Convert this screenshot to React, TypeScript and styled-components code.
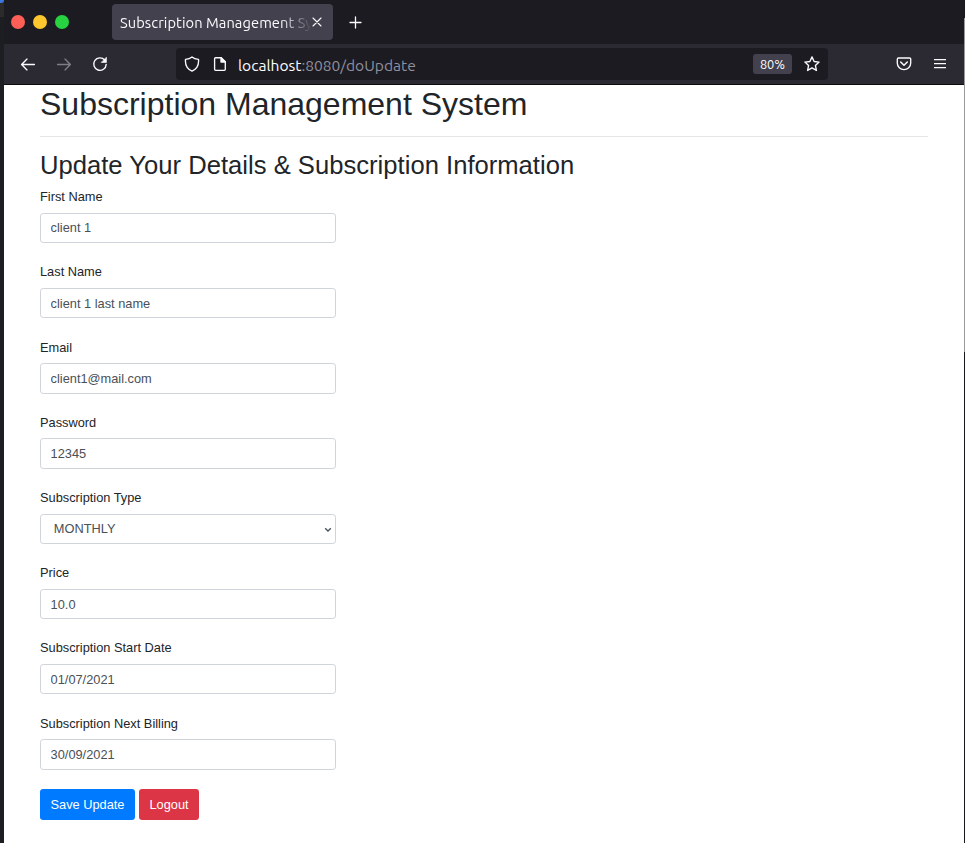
import React from "react";
import styled, { createGlobalStyle } from "styled-components";

const GlobalStyle = createGlobalStyle`
  * { box-sizing: border-box; }
  body { margin: 0; background: #fff; overflow: hidden; }
`;

const uiFont = `"Ubuntu", "Noto Sans", sans-serif`;
const pageFont = `"Liberation Sans", Arial, sans-serif`;

const Desktop = styled.div`
  display: grid;
  grid-template-columns: 4px 960px 1px;
  width: 965px;
  height: 843px;
`;

const LeftEdge = styled.div`
  background: linear-gradient(#2b2b2b 0 17px, #1c1e22 17px);
  &::before {
    content: "";
    display: block;
    width: 4px;
    height: 3px;
    background: #3b78e0;
    border-bottom-right-radius: 3px;
  }
`;

const RightEdge = styled.div`
  background: linear-gradient(#1a1a1e 0 18px, #999 18px 352px, #17171b 352px);
`;

const Window = styled.div`
  display: flex;
  flex-direction: column;
  background: #fff;
  overflow: hidden;
`;

const TabBar = styled.div`
  display: flex;
  align-items: center;
  height: 44px;
  background: #1c1b22;
  color: #fbfbfe;
`;

const Lights = styled.div`
  display: flex;
  gap: 8px;
  width: 108px;
  padding-left: 7px;
`;

const Light = styled.span<{ $color: string }>`
  width: 14px;
  height: 14px;
  border-radius: 50%;
  background: ${(p) => p.$color};
`;

const Tab = styled.div`
  display: flex;
  align-items: center;
  width: 221px;
  height: 36px;
  padding: 0 9px 0 8px;
  border-radius: 4px;
  background: #42414d;
`;

const TabTitle = styled.span`
  width: 190px;
  padding-top: 2px;
  overflow: hidden;
  white-space: nowrap;
  font: 14.67px/22px ${uiFont};
  font-weight: 430;
  letter-spacing: 0.07px;
  mask-image: linear-gradient(to right, #000 160px, transparent 192px);
`;

const NewTab = styled.div`
  display: flex;
  margin-left: 14px;
`;

const Toolbar = styled.div`
  display: flex;
  align-items: center;
  height: 41px;
  padding: 0 16px;
  background: #2b2a33;
  border-bottom: 1px solid #0c0c0d;
  color: #fbfbfe;
  svg { display: block; flex: none; }
`;

const NavButtons = styled.div`
  display: flex;
  gap: 20px;
  width: 156px;
`;

const Dimmed = styled.span`
  opacity: 0.4;
`;

const AddressBar = styled.div`
  display: flex;
  align-items: center;
  width: 652px;
  height: 32px;
  padding: 0 8px;
  border-radius: 4px;
  background: #1c1b22;
`;

const SiteIcons = styled.div`
  display: flex;
  gap: 12px;
  width: 54px;
`;

const Address = styled.span`
  flex: 1;
  padding-top: 2px;
  font: 15.58px/22px ${uiFont};
  font-weight: 430;
  color: #8f8f9d;
`;

const Host = styled.span`
  color: #fbfbfe;
`;

const ZoomBadge = styled.span`
  width: 39px;
  height: 20px;
  margin-right: 12px;
  border-radius: 3px;
  background: #42414d;
  font: 12.8px/21px ${uiFont};
  font-weight: 430;
  text-align: center;
`;

const ToolbarEnd = styled.div`
  display: flex;
  gap: 20px;
  margin-left: auto;
`;

const Page = styled.main`
  flex: 1;
  padding: 0 36px;
  font: 12.8px/19.2px ${pageFont};
  color: #212529;
`;

const Title = styled.h1`
  margin: 0;
  font-size: 32px;
  font-weight: 400;
  line-height: 38.4px;
`;

const Rule = styled.hr`
  margin: 12.6px 0 13.08px;
  border: 0;
  border-top: 1px solid #e5e5e5;
`;

const Subtitle = styled.h2`
  margin: 0 0 6.4px;
  font-size: 25.6px;
  font-weight: 400;
  line-height: 30.7px;
  letter-spacing: 0.015px;
`;

const Form = styled.form`
  display: flex;
  flex-direction: column;
  gap: 19.25px;
  width: 296px;
`;

const Field = styled.div`
  display: flex;
  flex-direction: column;
  gap: 6.4px;
`;

const Control = styled.div`
  position: relative;
  height: 30.4px;
`;

const Label = styled.label`
  height: 19.2px;
`;

const Input = styled.input`
  display: block;
  width: 100%;
  height: 100%;
  padding: 4.8px 9.6px;
  border: 1px solid #ced4da;
  border-radius: 3.2px;
  background: #fff;
  color: #495057;
  font: 12.8px/19.2px ${pageFont};
  outline: none;
`;

const Select = styled.select`
  display: block;
  appearance: none;
  width: 100%;
  height: 100%;
  padding: 4.6px 12.8px 5px;
  border: 1px solid #ced4da;
  border-radius: 3.2px;
  background: #fff;
  color: #495057;
  font: 12.8px/19.2px ${pageFont};
`;

const Chevron = styled.svg`
  position: absolute;
  right: 4px;
  top: 13px;
`;

const Actions = styled.div`
  display: flex;
  gap: 4px;
`;

const Button = styled.button<{ $color: string; $width: number }>`
  width: ${(p) => p.$width}px;
  height: 30.8px;
  padding: 0;
  border: 0;
  border-radius: 3.2px;
  background: ${(p) => p.$color};
  color: #fff;
  font: 12.8px/19.2px ${pageFont};
`;

const Icon = ({ children, size = 16 }: { children: React.ReactNode; size?: number }) => (
  <svg width={size} height={size} viewBox="0 0 16 16" fill="none" stroke="currentColor"
    strokeWidth="1.35" strokeLinecap="round" strokeLinejoin="round">
    {children}
  </svg>
);

const fields = [
  { label: "First Name", value: "client 1" },
  { label: "Last Name", value: "client 1 last name" },
  { label: "Email", value: "client1@mail.com" },
  { label: "Password", value: "12345" },
  { label: "Subscription Type", value: "MONTHLY", select: true },
  { label: "Price", value: "10.0" },
  { label: "Subscription Start Date", value: "01/07/2021" },
  { label: "Subscription Next Billing", value: "30/09/2021" },
];

export default function App() {
  return (
    <Desktop>
      <GlobalStyle />
      <LeftEdge />
      <Window>
        <TabBar>
          <Lights>
            <Light $color="#ff5f57" />
            <Light $color="#ffc72e" />
            <Light $color="#28d341" />
          </Lights>
          <Tab>
            <TabTitle>Subscription Management System</TabTitle>
            <svg width="14" height="14" viewBox="0 0 14 14" stroke="#fbfbfe" strokeWidth="1.1" strokeLinecap="round">
              <path d="M3 3l8 8M11 3l-8 8" />
            </svg>
          </Tab>
          <NewTab>
            <svg width="17" height="17" viewBox="0 0 17 17" stroke="currentColor" strokeWidth="1.3" strokeLinecap="round">
              <path d="M8.5 3v11M3 8.5h11" />
            </svg>
          </NewTab>
        </TabBar>
        <Toolbar>
          <NavButtons>
            <Icon><path d="M14.4 8.5H1.8M7 3.1L1.6 8.5 7 13.9" /></Icon>
            <Dimmed><Icon><path d="M1.6 8.5h12.6M9 3.1l5.4 5.4L9 13.9" /></Icon></Dimmed>
            <Icon>
              <path d="M12.7 4A6.25 6.25 0 1 0 14.2 8.4" />
              <path d="M14.4 1.6v4.8H9.6z" fill="currentColor" strokeWidth="0.7" />
            </Icon>
          </NavButtons>
          <AddressBar>
            <SiteIcons>
              <Icon><path d="M8 .9C6.3 2.3 4 3 1.5 3.3 1 8.5 3.2 13 8 15.1c4.8-2.1 7-6.6 6.5-11.8C12 3 9.7 2.3 8 .9z" /></Icon>
              <Icon>
                <path d="M3.6 1.7h5.6l4.1 4.1v7.5a1 1 0 0 1-1 1H3.6a1 1 0 0 1-1-1V2.7a1 1 0 0 1 1-1z" />
                <path d="M9 1.8v4.2h4.2z" fill="currentColor" />
              </Icon>
            </SiteIcons>
            <Address><Host>localhost</Host>:8080/doUpdate</Address>
            <ZoomBadge>80%</ZoomBadge>
            <Icon><path d="M8 .9l2.1 4.6 5 .55-3.7 3.4 1 5-4.4-2.5-4.4 2.5 1-5L.9 6.05l5-.55z" /></Icon>
          </AddressBar>
          <ToolbarEnd>
            <Icon>
              <path d="M2.5 2h11a1.2 1.2 0 0 1 1.2 1.2v4.1a6.7 6.3 0 0 1-13.4 0V3.2A1.2 1.2 0 0 1 2.5 2z" />
              <path d="M4.7 6l3.3 3.2L11.3 6" strokeWidth="1.5" />
            </Icon>
            <svg width="16" height="16" viewBox="0 0 16 16" fill="currentColor">
              <path d="M2 3h12v1.3H2zM2 7h12v1.3H2zM2 11h12v1.3H2z" />
            </svg>
          </ToolbarEnd>
        </Toolbar>
        <Page>
          <Title>Subscription Management System</Title>
          <Rule />
          <Subtitle>Update Your Details &amp; Subscription Information</Subtitle>
          <Form>
            {fields.map((f, i) => (
              <Field key={f.label}>
                <Label htmlFor={`field-${i}`}>{f.label}</Label>
                <Control>
                  {f.select ? (
                    <>
                      <Select id={`field-${i}`}><option>{f.value}</option></Select>
                      <Chevron width="8" height="6" viewBox="0 0 8 6" fill="none" stroke="#495057" strokeWidth="1.3">
                        <path d="M1.2 1.2L4 4l2.8-2.8" />
                      </Chevron>
                    </>
                  ) : (
                    <Input id={`field-${i}`} defaultValue={f.value} />
                  )}
                </Control>
              </Field>
            ))}
            <Actions>
              <Button type="button" $color="#007bff" $width={95}>Save Update</Button>
              <Button type="button" $color="#dc3545" $width={60}>Logout</Button>
            </Actions>
          </Form>
        </Page>
      </Window>
      <RightEdge />
    </Desktop>
  );
}
